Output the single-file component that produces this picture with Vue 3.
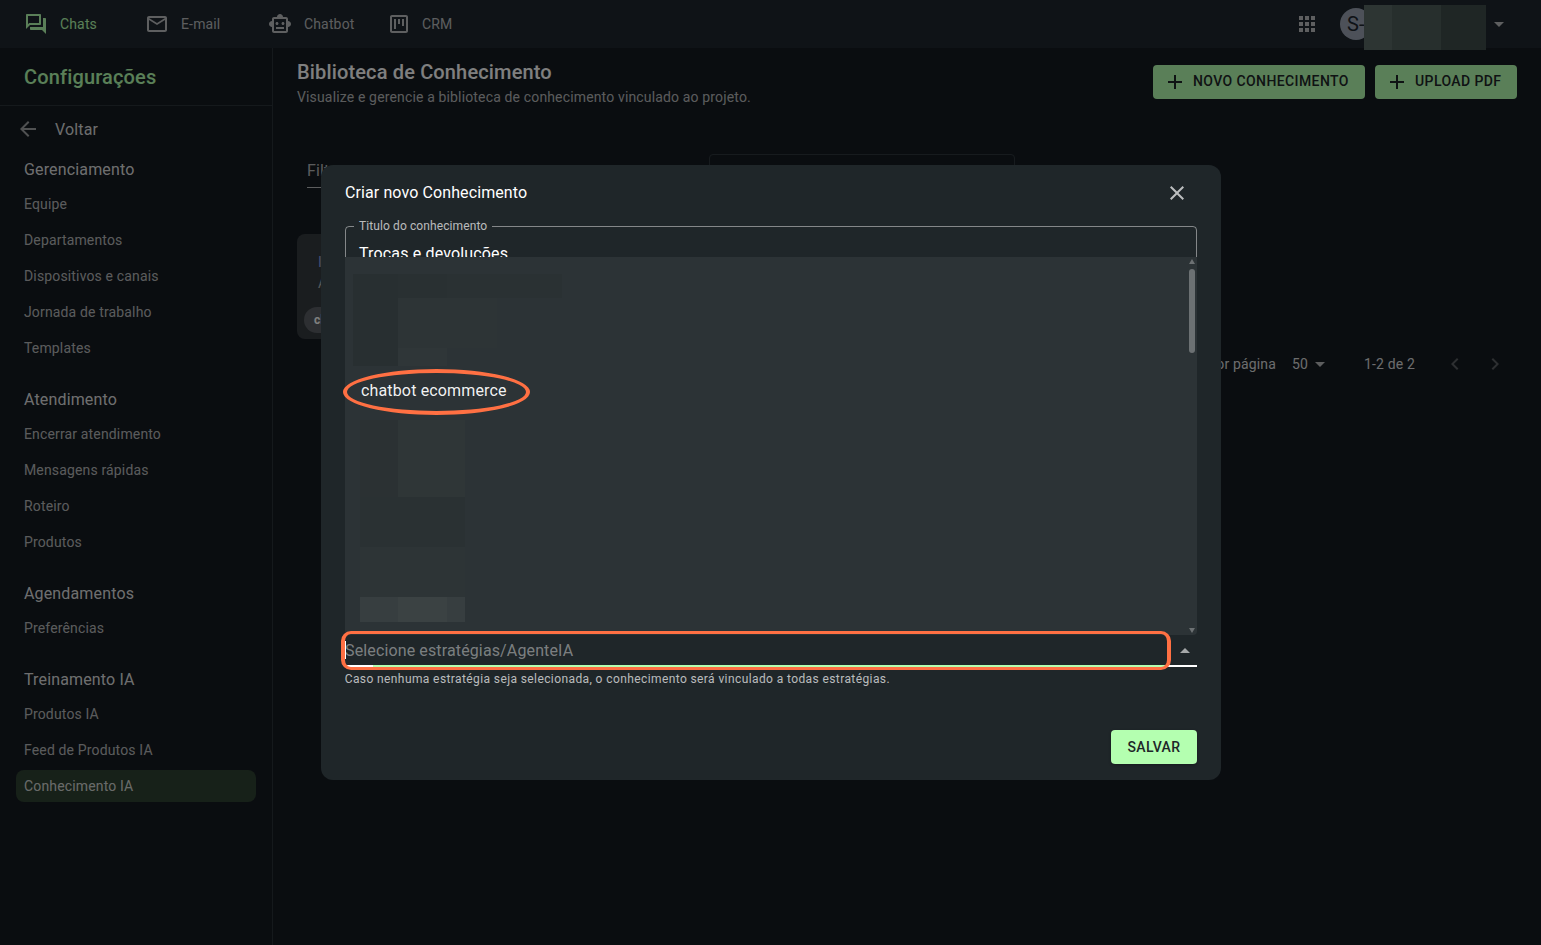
<script setup>
const tabs = [
  { key: 'chats', label: 'Chats', active: true, path: 'M15 4v7H5.17L4 12.17V4h11m1-2H3c-.55 0-1 .45-1 1v14l4-4h10c.55 0 1-.45 1-1V3c0-.55-.45-1-1-1zm5 4h-2v9H6v2c0 .55.45 1 1 1h11l4 4V7c0-.55-.45-1-1-1z' },
  { key: 'email', label: 'E-mail', path: 'M20 4H4c-1.1 0-1.99.9-1.99 2L2 18c0 1.1.9 2 2 2h16c1.1 0 2-.9 2-2V6c0-1.1-.9-2-2-2zm0 14H4V8l8 5 8-5v10zm-8-7L4 6h16l-8 5z' },
  { key: 'bot', label: 'Chatbot', path: 'M20 9V7c0-1.1-.9-2-2-2h-3c0-1.66-1.34-3-3-3S9 3.34 9 5H6c-1.1 0-2 .9-2 2v2c-1.66 0-3 1.34-3 3s1.34 3 3 3v4c0 1.1.9 2 2 2h12c1.1 0 2-.9 2-2v-4c1.66 0 3-1.34 3-3s-1.34-3-3-3zm-2 10H6V7h12v12zm-9-6c-.83 0-1.5-.67-1.5-1.5S8.17 10 9 10s1.5.67 1.5 1.5S9.83 13 9 13zm7.5-1.5c0 .83-.67 1.5-1.5 1.5s-1.5-.67-1.5-1.5.67-1.5 1.5-1.5 1.5.67 1.5 1.5zM8 15h8v2H8v-2z' },
  { key: 'crm', label: 'CRM', path: 'M19 3H5c-1.1 0-2 .9-2 2v14c0 1.1.9 2 2 2h14c1.1 0 2-.9 2-2V5c0-1.1-.9-2-2-2zm0 16H5V5h14v14zM7 7h2v10H7zm4 0h2v5h-2zm4 0h2v7h-2z' }
]
const sections = [
  { title: 'Gerenciamento', items: ['Equipe', 'Departamentos', 'Dispositivos e canais', 'Jornada de trabalho', 'Templates'] },
  { title: 'Atendimento', items: ['Encerrar atendimento', 'Mensagens rápidas', 'Roteiro', 'Produtos'] },
  { title: 'Agendamentos', items: ['Preferências'] },
  { title: 'Treinamento IA', items: ['Produtos IA', 'Feed de Produtos IA', 'Conhecimento IA'] }
]
const patches = [
  [8, 17, 45, 92, '#282f31'],
  [53, 17, 49, 24, '#293032'],
  [102, 17, 115, 24, '#2a3133'],
  [53, 41, 99, 50, '#2d3436'],
  [53, 91, 49, 18, '#2f3638'],
  [15, 163, 38, 154, '#2b3133'],
  [53, 163, 67, 77, '#2f3637'],
  [15, 240, 105, 50, '#2a3133'],
  [15, 290, 105, 50, '#2d3436'],
  [15, 340, 105, 25, '#373e40'],
  [53, 340, 49, 25, '#3b4243']
]
const mask = [
  [0, 28, '#5a6b66'],
  [28, 49, '#4f5e5a'],
  [77, 45, '#3f4d4a']
]
const patchStyle = (p) => ({ left: p[0] + 'px', top: p[1] + 'px', width: p[2] + 'px', height: p[3] + 'px', background: p[4] })
const maskStyle = (m) => ({ left: m[0] + 'px', width: m[1] + 'px', background: m[2] })
</script>

<template>
  <div class="app">
    <header class="topbar">
      <nav class="tabs">
        <div v-for="t in tabs" :key="t.key" class="tab" :class="['tab-' + t.key, { active: t.active }]">
          <svg class="ico" viewBox="0 0 24 24"><path :d="t.path" /></svg>
          <span>{{ t.label }}</span>
        </div>
      </nav>
      <div class="account">
        <svg class="ico apps" viewBox="0 0 24 24"><path d="M4 8h4V4H4v4zm6 12h4v-4h-4v4zm-6 0h4v-4H4v4zm0-6h4v-4H4v4zm6 0h4v-4h-4v4zm6-10v4h4V4h-4zm-6 4h4V4h-4v4zm6 6h4v-4h-4v4zm0 6h4v-4h-4v4z" /></svg>
        <div class="avatar">S-</div>
        <div class="mask">
          <i v-for="(m, i) in mask" :key="i" :style="maskStyle(m)"></i>
        </div>
        <span class="caret"></span>
      </div>
    </header>

    <div class="body">
      <aside class="sidebar">
        <div class="side-head">Configurações</div>
        <div class="back">
          <svg class="ico" viewBox="0 0 24 24"><path d="M20 11H7.83l5.59-5.59L12 4l-8 8 8 8 1.41-1.41L7.83 13H20v-2z" /></svg>
          <span>Voltar</span>
        </div>
        <section v-for="s in sections" :key="s.title" class="side-section">
          <h3>{{ s.title }}</h3>
          <div v-for="item in s.items" :key="item" class="side-item" :class="{ current: item === 'Conhecimento IA' }">
            <span>{{ item }}</span>
          </div>
        </section>
      </aside>

      <main class="main">
        <div class="main-head">
          <div>
            <h1>Biblioteca de Conhecimento</h1>
            <p>Visualize e gerencie a biblioteca de conhecimento vinculado ao projeto.</p>
          </div>
          <div class="actions">
            <button class="btn btn-wide"><svg class="ico" viewBox="0 0 24 24"><path d="M19 13h-6v6h-2v-6H5v-2h6V5h2v6h6v2z" /></svg><span>NOVO CONHECIMENTO</span></button>
            <button class="btn"><svg class="ico" viewBox="0 0 24 24"><path d="M19 13h-6v6h-2v-6H5v-2h6V5h2v6h6v2z" /></svg><span>UPLOAD PDF</span></button>
          </div>
        </div>

        <div class="filters">
          <div class="filter-select">Filtrar</div>
          <div class="filter-search"></div>
        </div>

        <div class="kcard">
          <div class="kcard-title">Informações</div>
          <div class="kcard-sub">Atualizado</div>
          <div class="chip">chatbot</div>
        </div>

        <div class="pager">
          <span>Linhas por página</span>
          <span class="pager-size">50</span>
          <span class="caret small"></span>
          <span class="pager-range">1-2 de 2</span>
          <svg class="ico chev" viewBox="0 0 24 24"><path d="M15.41 7.41 14 6l-6 6 6 6 1.41-1.41L10.83 12z" /></svg>
          <svg class="ico chev" viewBox="0 0 24 24"><path d="M10 6 8.59 7.41 13.17 12l-4.58 4.58L10 18l6-6z" /></svg>
        </div>
      </main>
    </div>

    <div class="scrim"></div>

    <div class="modal">
      <div class="modal-head">
        <h2>Criar novo Conhecimento</h2>
        <svg class="ico close" viewBox="0 0 24 24"><path d="M19 6.41 17.59 5 12 10.59 6.41 5 5 6.41 10.59 12 5 17.59 6.41 19 12 13.41 17.59 19 19 17.59 13.41 12z" /></svg>
      </div>
      <div class="modal-body">
        <div class="field">
          <label>Titulo do conhecimento</label>
          <div class="field-value">Trocas e devoluções</div>
        </div>

        <div class="combo-wrap">
          <div class="menu">
            <i v-for="(p, i) in patches" :key="i" class="patch" :style="patchStyle(p)"></i>
            <div class="option">chatbot ecommerce</div>
            <div class="scroll">
              <span class="arrow up"></span>
              <span class="thumb"></span>
              <span class="arrow down"></span>
            </div>
          </div>
          <div class="combo">
            <span class="text-caret"></span>
            <span class="placeholder">Selecione estratégias/AgenteIA</span>
            <span class="combo-caret"></span>
            <span class="combo-line"></span>
          </div>
          <p class="helper">Caso nenhuma estratégia seja selecionada, o conhecimento será vinculado a todas estratégias.</p>
        </div>
      </div>
      <div class="modal-foot">
        <button class="save">SALVAR</button>
      </div>
    </div>

    <div class="mark mark-ellipse"></div>
    <div class="mark mark-rect"></div>
  </div>
</template>

<style>
html, body { margin: 0; background: #0a0d10; }
</style>

<style scoped>
* { box-sizing: border-box; }
.app {
  position: relative;
  width: 1541px;
  height: 945px;
  overflow: hidden;
  display: flex;
  flex-direction: column;
  background: #141a20;
  color: #fff;
  font-family: Roboto, "Liberation Sans", sans-serif;
  letter-spacing: .15px;
}
.ico { width: 24px; height: 24px; fill: currentColor; flex: none; display: block; }

.topbar {
  height: 48px;
  flex: none;
  background: #1e262e;
  display: flex;
  align-items: center;
  justify-content: space-between;
  padding-left: 24px;
}
.tabs { display: flex; }
.tab {
  display: flex;
  align-items: center;
  gap: 12px;
  font-size: 14px;
  color: rgba(255, 255, 255, .7);
}
.tab.active { color: #b4ffb0; }
.tab-chats { width: 121px; }
.tab-email { width: 123px; }
.tab-bot { width: 119px; }
.tab-crm { gap: 11px; }
.account { display: flex; align-items: center; position: relative; width: 246px; height: 48px; }
.apps { color: rgba(255, 255, 255, .7); }
.avatar {
  width: 32px;
  height: 32px;
  margin-left: 21px;
  border-radius: 50%;
  background: #9aa3b2;
  color: #1e262e;
  font-size: 20px;
  line-height: 32px;
  padding-left: 7px;
  white-space: nowrap;
}
.mask { position: absolute; left: 69px; top: 5px; width: 122px; height: 45px; }
.mask i { position: absolute; top: 0; bottom: 0; }
.caret {
  width: 0;
  height: 0;
  border-left: 5px solid transparent;
  border-right: 5px solid transparent;
  border-top: 5px solid rgba(255, 255, 255, .7);
  display: block;
}
.account .caret { position: absolute; left: 199px; top: 22px; }

.body { flex: 1; display: flex; min-height: 0; }
.sidebar { width: 273px; flex: none; border-right: 1px solid #2a3238; }
.side-head {
  height: 58px;
  border-bottom: 1px solid #2a3238;
  padding: 17px 24px 0;
  font-size: 20px;
  font-weight: 500;
  line-height: 24px;
  color: #b4ffb0;
}
.back {
  height: 46px;
  padding-left: 16px;
  display: flex;
  align-items: center;
  gap: 15px;
  font-size: 16px;
  color: rgba(255, 255, 255, .85);
}
.back .ico { color: rgba(255, 255, 255, .6); }
.side-section { margin-bottom: 16px; }
.side-section h3 {
  margin: 0;
  height: 34px;
  padding-left: 24px;
  font-size: 16px;
  font-weight: 400;
  line-height: 36px;
  color: rgba(255, 255, 255, .87);
}
.side-item {
  height: 36px;
  padding: 2px 16px;
  font-size: 14px;
  color: rgba(255, 255, 255, .7);
}
.side-item span { display: block; height: 32px; line-height: 32px; padding-left: 8px; border-radius: 8px; }
.side-item.current { color: rgba(255, 255, 255, .8); }
.side-item.current span { background: #2f4232; }

.main { flex: 1; padding: 12px 24px 0; min-width: 0; }
.main-head { display: flex; justify-content: space-between; height: 94px; }
.main-head h1 { margin: 0; font-size: 20px; font-weight: 500; line-height: 24px; }
.main-head p { margin: 2px 0 0; font-size: 14px; line-height: 22px; color: rgba(255, 255, 255, .7); }
.actions { display: flex; gap: 10px; padding-top: 5px; }
.btn {
  height: 34px;
  width: 142px;
  border: 0;
  border-radius: 4px;
  background: #b4ffb0;
  color: #1f2629;
  font: 500 14px Roboto, sans-serif;
  letter-spacing: .4px;
  display: flex;
  align-items: center;
  gap: 6px;
  padding: 0 0 0 10px;
}
.btn span { position: relative; top: -1px; }
.btn-wide { width: 212px; }

.filters { display: flex; padding-left: 10px; height: 80px; }
.filter-select {
  width: 402px;
  height: 34px;
  border-bottom: 1px solid rgba(255, 255, 255, .7);
  font-size: 16px;
  line-height: 34px;
  color: rgba(255, 255, 255, .7);
}
.filter-search { width: 306px; height: 56px; border: 1px solid #2f373d; border-radius: 4px; }

.kcard { width: 300px; height: 105px; background: #353a3f; border-radius: 8px; position: relative; padding: 18px 21px; }
.kcard-title { font-size: 14px; line-height: 20px; color: #8f9fe0; }
.kcard-sub { font-size: 14px; line-height: 22px; color: rgba(255, 255, 255, .6); }
.chip {
  position: absolute;
  left: 7px;
  top: 73px;
  height: 26px;
  padding: 0 10px;
  border-radius: 13px;
  background: #5a5f64;
  font-size: 12px;
  font-weight: 700;
  line-height: 26px;
}

.pager {
  height: 50px;
  display: flex;
  align-items: center;
  justify-content: flex-end;
  font-size: 14px;
  color: rgba(255, 255, 255, .85);
  padding-right: 10px;
}
.pager-size { margin-left: 16px; }
.caret.small { margin-left: 7px; }
.pager-range { margin-left: 39px; margin-right: 28px; }
.chev { color: rgba(255, 255, 255, .3); }
.chev + .chev { margin-left: 16px; }

.scrim { position: absolute; inset: 0; background: rgba(0, 0, 0, .5); }

.modal {
  position: absolute;
  left: 321px;
  top: 165px;
  width: 900px;
  height: 615px;
  background: #1f2629;
  border-radius: 12px;
  display: flex;
  flex-direction: column;
}
.modal-head { height: 54px; display: flex; align-items: center; justify-content: space-between; padding: 0 32px 0 24px; }
.modal-head h2 { margin: 0; font-size: 16px; font-weight: 400; letter-spacing: .1px; }
.close { color: rgba(255, 255, 255, .7); margin-top: 2px; }
.modal-body { flex: 1; padding: 7px 24px 0; position: relative; }
.field {
  height: 56px;
  border: 1px solid rgba(255, 255, 255, .45);
  border-radius: 4px;
  position: relative;
  padding: 17px 13px 0;
}
.field label {
  position: absolute;
  left: 8px;
  top: -8px;
  padding: 0 5px;
  background: #1f2629;
  font-size: 12px;
  line-height: 14px;
  letter-spacing: .1px;
  color: rgba(255, 255, 255, .7);
}
.field-value { font-size: 16px; line-height: 20px; }
.combo-wrap { margin-top: 353px; position: relative; }
.menu {
  position: absolute;
  left: 0;
  right: 0;
  top: -378px;
  height: 378px;
  background: #2c3336;
  border-radius: 0 0 4px 4px;
  overflow: hidden;
}
.patch { position: absolute; display: block; }
.option {
  position: absolute;
  left: 16px;
  top: 122px;
  font-size: 16px;
  line-height: 24px;
  color: rgba(255, 255, 255, .95);
}
.scroll { position: absolute; right: 0; top: 0; bottom: 0; width: 11px; }
.thumb { position: absolute; left: 3px; top: 12px; width: 6px; height: 84px; border-radius: 3px; background: #6c7173; }
.arrow { position: absolute; left: 3px; width: 0; height: 0; border-left: 3.5px solid transparent; border-right: 3.5px solid transparent; }
.arrow.up { top: 2px; border-bottom: 5px solid #6c7173; }
.arrow.down { bottom: 2px; border-top: 5px solid #6c7173; }

.combo { height: 32px; position: relative; display: flex; align-items: center; }
.placeholder { font-size: 16px; letter-spacing: .13px; color: rgba(255, 255, 255, .42); padding-bottom: 1px; }
.text-caret { position: absolute; left: 0; top: 6px; width: 1px; height: 18px; background: #fff; }
.combo-caret {
  position: absolute;
  right: 7px;
  top: 13px;
  width: 0;
  height: 0;
  border-left: 5px solid transparent;
  border-right: 5px solid transparent;
  border-bottom: 5px solid rgba(255, 255, 255, .6);
}
.combo-line {
  position: absolute;
  left: 0;
  right: 0;
  bottom: 0;
  height: 2px;
  background: linear-gradient(to right, #fff 0, #fff 28px, #b4ffb0 28px, #b4ffb0 822px, #fff 822px);
}
.helper { margin: 2px 0 0 -.3px; font-size: 12px; line-height: 20px; letter-spacing: .4px; color: rgba(255, 255, 255, .7); }
.modal-foot { display: flex; justify-content: flex-end; padding: 0 24px 16px; }
.save {
  width: 86px;
  height: 34px;
  border: 0;
  border-radius: 4px;
  background: #b4ffb0;
  color: #1f2629;
  font: 500 14px Roboto, sans-serif;
  letter-spacing: .4px;
  padding-bottom: 2px;
  box-shadow: 0 1px 3px rgba(0, 0, 0, .3);
}

.mark { position: absolute; border-style: solid; border-color: #ff7043; }
.mark-ellipse { left: 343px; top: 369px; width: 187px; height: 46px; border-width: 4px; border-radius: 50%; }
.mark-rect { left: 341px; top: 631px; width: 830px; height: 39px; border-width: 3px 4px; border-radius: 10px; }
</style>
